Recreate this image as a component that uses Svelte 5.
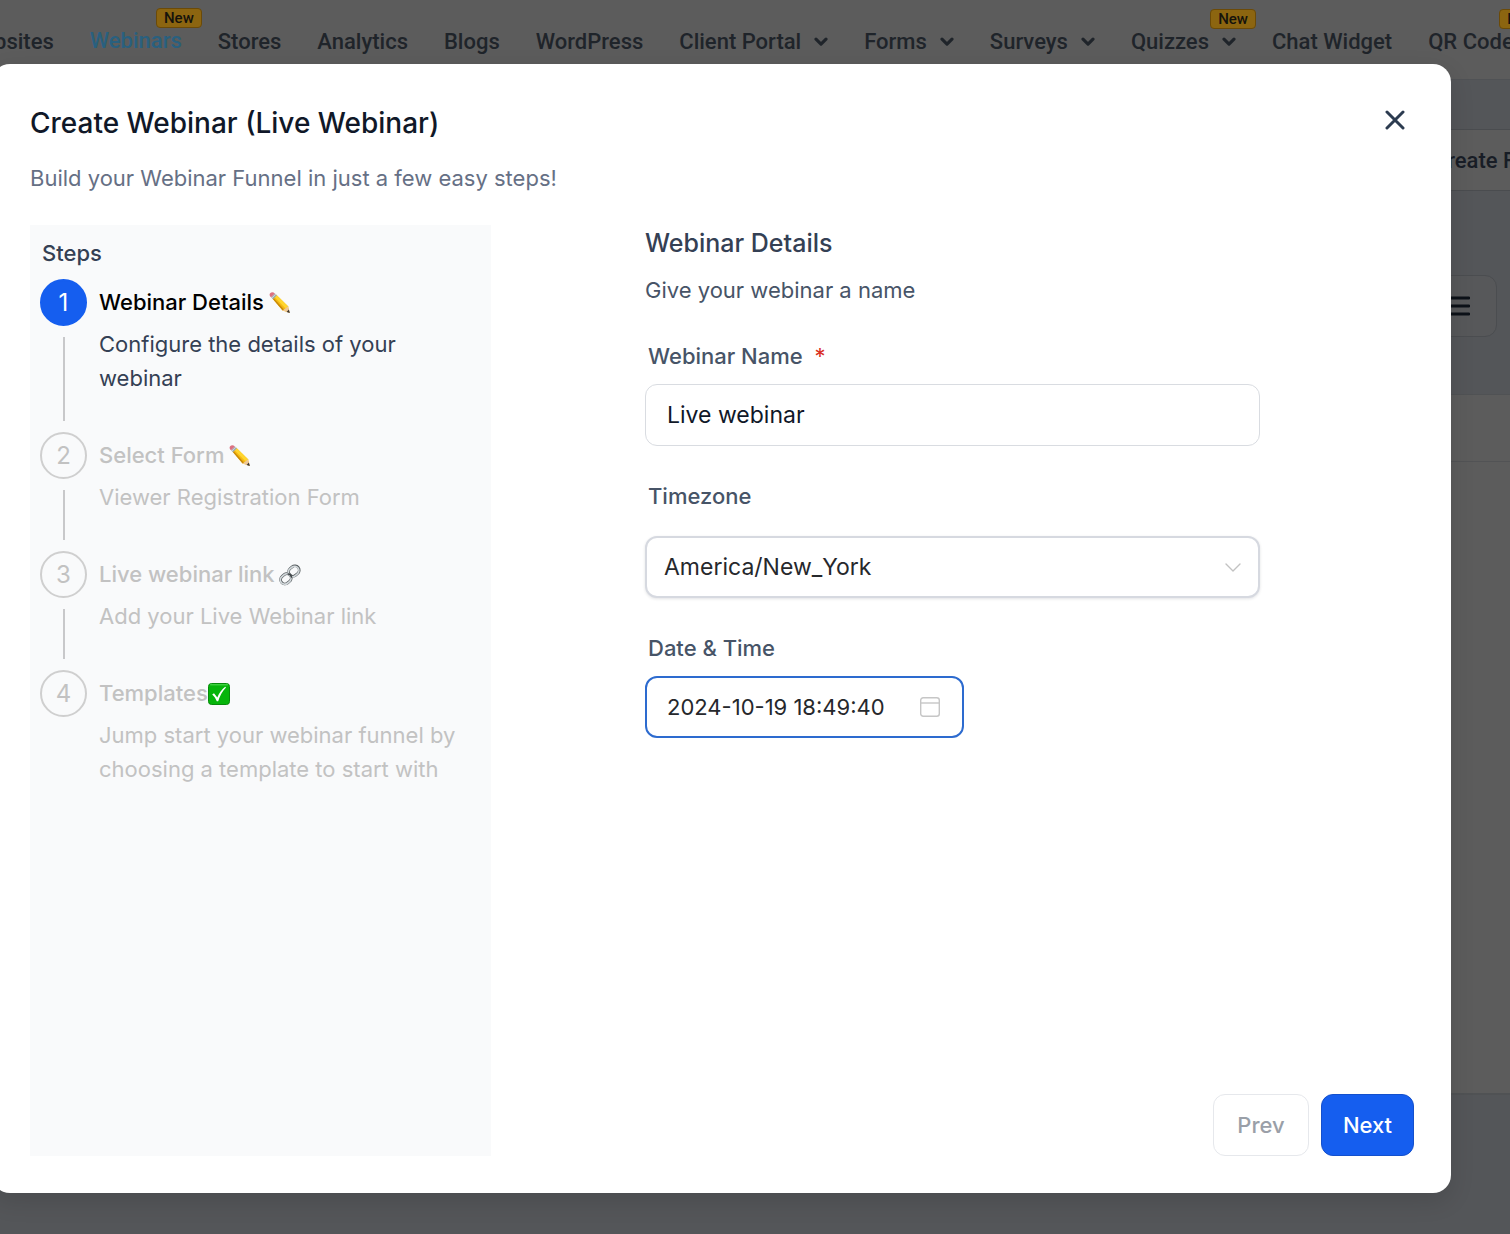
<script lang="ts">
  type NavItem = { label: string; menu?: boolean; active?: boolean; isNew?: boolean };

  const navItems: NavItem[] = [
    { label: 'Websites' },
    { label: 'Webinars', active: true, isNew: true },
    { label: 'Stores' },
    { label: 'Analytics' },
    { label: 'Blogs' },
    { label: 'WordPress' },
    { label: 'Client Portal', menu: true },
    { label: 'Forms', menu: true },
    { label: 'Surveys', menu: true },
    { label: 'Quizzes', menu: true, isNew: true },
    { label: 'Chat Widget' },
    { label: 'QR Codes', isNew: true }
  ];

  const steps = [
    { title: 'Webinar Details', icon: 'pencil', text: 'Configure the details of your webinar' },
    { title: 'Select Form', icon: 'pencil', text: 'Viewer Registration Form' },
    { title: 'Live webinar link', icon: 'link', text: 'Add your Live Webinar link' },
    { title: 'Templates', icon: 'check', text: 'Jump start your webinar funnel by choosing a template to start with' }
  ];

  let current = $state(0);
  let open = $state(true);
  let webinarName = $state('Live webinar');
  let timezone = $state('America/New_York');
  let dateTime = $state('2024-10-19 18:49:40');
</script>

<div class="page">
  <nav class="topnav">
    {#each navItems as item}
      <a href="#top" class="nav-link" class:active={item.active}>
        {item.label}
        {#if item.menu}
          <svg viewBox="0 0 14 10" width="14" height="10">
            <path d="M2 2.2 7 7.2 12 2.2" fill="none" stroke="currentColor" stroke-width="3.1" stroke-linecap="round" stroke-linejoin="round" />
          </svg>
        {/if}
        {#if item.isNew}
          <span class="badge">New</span>
        {/if}
      </a>
    {/each}
  </nav>

  <div class="workspace">
    <div class="toolbar">
      <button type="button" class="create">Create Funnel</button>
    </div>
    <div class="filters">
      <button type="button" class="list-view" aria-label="List view">
        <svg viewBox="0 0 20 20" width="20" height="20">
          <path d="M1 2h18M1 10h18M1 18h18" stroke="currentColor" stroke-width="2.8" stroke-linecap="round" />
        </svg>
      </button>
    </div>
    <div class="listing">
      <div class="listing-head"></div>
    </div>
  </div>

  {#if open}
    <div class="backdrop">
      <div class="modal" role="dialog" aria-labelledby="modal-title">
        <header class="modal-head">
          <h1 id="modal-title">Create Webinar (Live Webinar)</h1>
          <button type="button" class="close" aria-label="Close" onclick={() => (open = false)}>
            <svg viewBox="0 0 20 20" width="20" height="20">
              <path d="M2 2l16 16M18 2L2 18" stroke="currentColor" stroke-width="3" stroke-linecap="round" />
            </svg>
          </button>
        </header>
        <p class="subtitle">Build your Webinar Funnel in just a few easy steps!</p>

        <div class="modal-body">
          <aside class="steps">
            <h2>Steps</h2>
            <ol>
              {#each steps as step, i}
                <li class="step" class:current={i === current}>
                  <div class="rail">
                    <span class="circle">{i + 1}</span>
                    {#if i < steps.length - 1}<span class="line"></span>{/if}
                  </div>
                  <div class="step-text">
                    <h3>
                      <span>{step.title}</span>
                      {#if step.icon === 'pencil'}
                        <svg viewBox="0 0 22 22" width="22" height="22">
                          <path d="M4.6 6.8 8.3 2.7 20 14.2 21.6 20.8 14.6 18.6z" fill="#f5b912" />
                          <path d="M6.2 4.8 17.6 16.5 20 14.2 8.3 2.7z" fill="#ffd52e" />
                          <path d="M4.6 6.8 14.6 18.6 16 17.5 5.4 5.8z" fill="#c98a08" />
                          <path d="M14.6 18.6 21.6 20.8 20 14.2 17.6 16.3z" fill="#efc896" />
                          <path d="M18.6 19.9 21.8 21 20.9 17.4z" fill="#3b3431" />
                          <path d="M3.1 5.2 6.9 1.4 8.9 3.2 5 7.2z" fill="#9caab0" />
                          <path d="M3.9 6 7.8 2.2" stroke="#e4eaed" stroke-width=".7" />
                          <path d="M3.1 5.2C-.7 2.2 3.5-1.5 6.9 1.4z" fill="#dc7180" />
                        </svg>
                      {:else if step.icon === 'link'}
                        <svg viewBox="0 0 22 22" width="22" height="22" fill="none" stroke-linecap="round">
                          <g stroke="#565c5f" stroke-width="2.8">
                            <rect x="9.3" y="2.7" width="11.2" height="8.6" rx="4.3" transform="rotate(-40 14.9 7)" />
                            <rect x="1.3" y="10.5" width="11.2" height="8.6" rx="4.3" transform="rotate(-40 6.9 14.8)" />
                          </g>
                          <g stroke="#d3d9dc" stroke-width="1.7">
                            <rect x="9" y="3.1" width="11.2" height="8.6" rx="4.3" transform="rotate(-40 14.6 7.4)" />
                            <rect x="1.1" y="10.8" width="11.2" height="8.6" rx="4.3" transform="rotate(-40 6.7 15.1)" />
                          </g>
                          <path d="M9.4 10c1.8.2 2.8 1.2 3 3" stroke="#3f4548" stroke-width="1.7" />
                        </svg>
                      {:else}
                        <svg class="flush" viewBox="0 0 22 22" width="22" height="22">
                          <rect x=".5" y=".5" width="21" height="21" rx="3" fill="#06b50b" stroke="#078a0b" />
                          <path d="M2.5 1.8h17" stroke="#54dc55" stroke-width="1" stroke-linecap="round" />
                          <path d="M4.2 11.4 6 10.3 9.3 14.4C11.2 9.8 13.6 6.6 17.2 3.8L18 4.6C14.2 8.6 12 12.8 10.2 18.2H8.8C7.8 15.6 6.2 13.2 4.2 11.4z" fill="#fff" />
                        </svg>
                      {/if}
                    </h3>
                    <p>{step.text}</p>
                  </div>
                </li>
              {/each}
            </ol>
          </aside>

          <section class="details">
            <form class="form" onsubmit={(e) => e.preventDefault()}>
              <h2>Webinar Details</h2>
              <p class="hint">Give your webinar a name</p>

              <label for="webinar-name">Webinar Name <span class="required">*</span></label>
              <input id="webinar-name" type="text" bind:value={webinarName} />

              <label for="timezone">Timezone</label>
              <div class="select-box">
                <select id="timezone" bind:value={timezone}>
                  <option>America/New_York</option>
                  <option>America/Chicago</option>
                  <option>America/Los_Angeles</option>
                </select>
                <svg class="arrow" viewBox="0 0 16 10" width="16" height="10">
                  <path d="M1 1l7 7 7-7" fill="none" stroke="currentColor" stroke-width="1.4" stroke-linecap="round" stroke-linejoin="round" />
                </svg>
              </div>

              <label for="date-time">Date &amp; Time</label>
              <div class="date-box">
                <input id="date-time" type="text" bind:value={dateTime} />
                <svg viewBox="0 0 20 20" width="20" height="20" fill="none" stroke="currentColor" stroke-width="1.4">
                  <rect x=".7" y=".7" width="18.6" height="18.6" rx="2.5" />
                  <path d="M1 6h18" />
                </svg>
              </div>
            </form>

            <footer class="actions">
              <button type="button" class="prev" disabled={current === 0} onclick={() => (current -= 1)}>Prev</button>
              <button type="button" class="next" onclick={() => (current = Math.min(current + 1, steps.length - 1))}>Next</button>
            </footer>
          </section>
        </div>
      </div>
    </div>
  {/if}
</div>

<style>
  :global(body) {
    margin: 0;
  }

  .page, .page * {
    box-sizing: border-box;
  }

  h1, h2, h3, p, ol {
    margin: 0;
    padding: 0;
  }

  button, input, select {
    font: inherit;
  }

  .page {
    position: relative;
    display: flex;
    flex-direction: column;
    min-height: 100vh;
    overflow: hidden;
    background: #545659;
    font-family: Inter, sans-serif;
    font-size: 22px;
  }

  /* Top navigation */
  .topnav {
    display: flex;
    align-items: center;
    justify-content: flex-end;
    gap: 36px;
    height: 80px;
    margin-right: -15px;
    padding-top: 4px;
    background: #5c5c5c;
    border-bottom: 1px solid #505255;
    font-family: Roboto, sans-serif;
    font-weight: 500;
  }

  .nav-link {
    position: relative;
    display: flex;
    align-items: center;
    gap: 13px;
    flex-shrink: 0;
    color: #1f242a;
    line-height: 26px;
    text-decoration: none;
    white-space: nowrap;
  }

  .nav-link.active {
    padding-bottom: 2px;
    color: #29607f;
  }

  .badge {
    position: absolute;
    top: -20px;
    right: -20px;
    padding: 0 7px;
    border: 1px solid #6b4a08;
    border-radius: 4px;
    background: #8c6510;
    color: #15130c;
    font-size: 15px;
    line-height: 18px;
  }

  /* Page behind the dialog */
  .workspace {
    flex: 1;
    display: flex;
    flex-direction: column;
  }

  .toolbar {
    display: flex;
    justify-content: flex-end;
    margin: 49px -84px 0 0;
  }

  .create {
    height: 62px;
    padding: 0 24px;
    border: 1px solid #4a4c4f;
    border-radius: 10px;
    background: #5c5c5c;
    color: #181d26;
    font-family: Roboto, sans-serif;
    font-weight: 500;
  }

  .filters {
    display: flex;
    justify-content: flex-end;
    padding: 84px 13px 57px 0;
  }

  .list-view {
    display: flex;
    align-items: center;
    justify-content: flex-end;
    width: 92px;
    height: 62px;
    padding: 0 26px;
    border: 1px solid #4b4d50;
    border-radius: 12px;
    background: #57585a;
    color: #0c1118;
  }

  .listing {
    height: 701px;
    border: solid #505254;
    border-width: 1px 0 2px;
    background: #5c5c5c;
  }

  .listing-head {
    height: 67px;
    border-bottom: 1px solid #525355;
  }

  /* Dialog */
  .backdrop {
    position: absolute;
    inset: 0;
    display: flex;
    padding: 64px 59px 41px 0;
  }

  .modal {
    flex: 1;
    display: flex;
    flex-direction: column;
    margin-left: -8px;
    padding: 38px 37px 37px 38px;
    border-radius: 18px;
    background: #fff;
    box-shadow: 0 8px 24px rgba(0, 0, 0, 0.12);
  }

  .modal-head {
    display: flex;
    align-items: flex-start;
    justify-content: space-between;
    padding-right: 9px;
  }

  h1 {
    color: #101828;
    font-size: 28px;
    font-weight: 500;
    line-height: 42px;
  }

  .close {
    display: flex;
    padding: 8px 0;
    border: 0;
    background: none;
    color: #2c3b50;
  }

  .subtitle {
    margin-top: 18px;
    color: #667085;
    line-height: 32px;
  }

  .modal-body {
    flex: 1;
    display: flex;
    margin-top: 31px;
  }

  .steps {
    width: 461px;
    padding: 12px 10px;
    background: #f9fafb;
  }

  .steps h2 {
    padding-left: 2px;
    color: #344054;
    font-size: 22px;
    font-weight: 500;
    line-height: 32px;
  }

  ol {
    margin-top: 10px;
    list-style: none;
  }

  .step {
    display: flex;
    gap: 12px;
    color: #c2c2c2;
  }

  .rail {
    display: flex;
    flex-direction: column;
    align-items: center;
    flex-shrink: 0;
  }

  .circle {
    display: flex;
    align-items: center;
    justify-content: center;
    width: 47px;
    height: 47px;
    border: 2px solid #cfcfcf;
    border-radius: 50%;
    font-size: 24px;
  }

  .line {
    flex: 1;
    width: 2px;
    margin: 11px 0;
    background: #c8c8ca;
  }

  .step-text {
    padding-bottom: 37px;
  }

  .step h3 {
    display: flex;
    align-items: center;
    gap: 4px;
    font-size: 22px;
    font-weight: 500;
    line-height: 47px;
  }

  .step p {
    margin-top: 1px;
    line-height: 34px;
  }

  .flush {
    margin-left: -4px;
  }

  .current .circle {
    border-color: #155eef;
    background: #155eef;
    color: #fff;
  }

  .current h3 {
    color: #000;
  }

  .current p {
    color: #344054;
  }

  /* Form */
  .details {
    flex: 1;
    display: flex;
    flex-direction: column;
    justify-content: space-between;
    padding-left: 154px;
  }

  .form {
    display: flex;
    flex-direction: column;
    margin-right: 154px;
  }

  .form h2 {
    color: #344054;
    font-size: 25px;
    font-weight: 500;
    line-height: 36px;
  }

  .hint {
    margin-top: 13px;
    color: #475467;
    line-height: 32px;
  }

  label {
    margin: 34px 0 12px 3px;
    color: #475467;
    font-weight: 500;
    line-height: 32px;
  }

  .required {
    margin-left: 6px;
    color: #d92d20;
    font-weight: 400;
  }

  #webinar-name, .select-box, .date-box {
    height: 62px;
    border: 1px solid #d9dce1;
    border-radius: 12px;
    background: #fff;
  }

  input, select {
    color: #101828;
    outline: none;
  }

  #webinar-name {
    padding: 0 21px;
    font-size: 23px;
  }

  .select-box {
    position: relative;
    margin-top: 12px;
    border: 2px solid #d6d9e0;
    box-shadow: 0 1px 3px rgba(16, 24, 40, 0.12);
  }

  select {
    width: 100%;
    height: 100%;
    padding: 0 17px;
    border: 0;
    background: none;
    appearance: none;
    color: #26282c;
    font-size: 23px;
  }

  .arrow {
    position: absolute;
    top: 25px;
    right: 17px;
    color: #c2c2c2;
    pointer-events: none;
  }

  .date-box {
    display: flex;
    align-items: center;
    width: 319px;
    padding: 0 22px 0 20px;
    border: 2px solid #2d6bcf;
  }

  .date-box input {
    flex: 1;
    min-width: 0;
    padding: 0;
    border: 0;
    background: none;
    color: #26282c;
  }

  .date-box svg {
    color: #c6c6c6;
  }

  .actions {
    display: flex;
    justify-content: flex-end;
    gap: 12px;
  }

  .actions button {
    height: 62px;
    border: 1px solid #e6e8ec;
    border-radius: 12px;
    background: #fff;
    font-weight: 500;
  }

  .actions .prev {
    width: 96px;
    color: #9a9fa8;
  }

  .actions .next {
    width: 93px;
    border-color: #1450cc;
    background: #155eef;
    color: #fff;
  }
</style>
